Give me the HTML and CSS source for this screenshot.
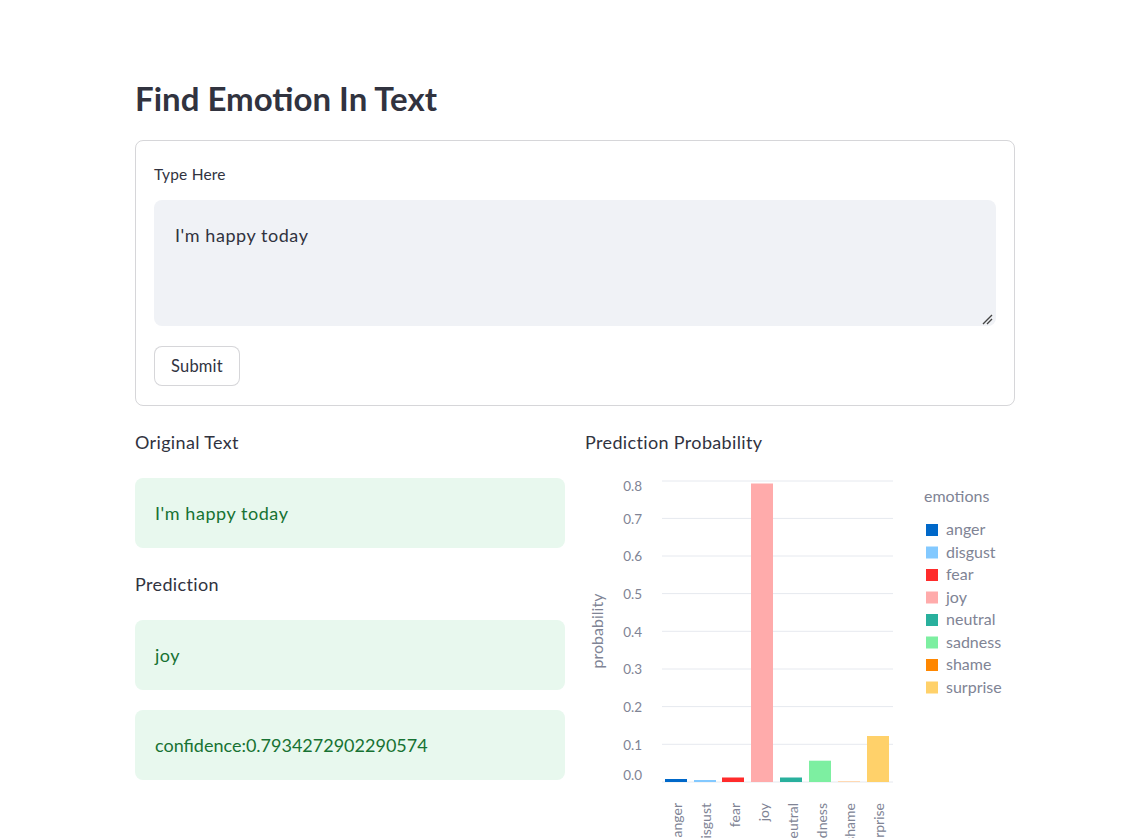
FILE: index.html
```html
<!DOCTYPE html>
<html lang="en">
<head>
<meta charset="utf-8">
<title>Find Emotion In Text</title>
<link rel="stylesheet" href="styles.css">
</head>
<body>
<main class="page">
  <h1 class="title">Find Emotion In Text</h1>

  <form class="form-card">
    <label class="field-label">Type Here</label>
    <div class="textarea">I'm happy today
      <svg class="resize" width="12" height="12" viewBox="0 0 12 12"><path d="M2 11 L11 2 M6 11 L11 6" stroke="#444" stroke-width="1.4" fill="none"/></svg>
    </div>
    <button type="button" class="submit">Submit</button>
  </form>

  <div class="cols">
    <section class="col">
      <h3 class="col-label">Original Text</h3>
      <div class="success">I'm happy today</div>
      <h3 class="col-label">Prediction</h3>
      <div class="success">joy</div>
      <div class="success num">confidence:0.7934272902290574</div>
    </section>

    <section class="col">
      <h3 class="col-label">Prediction Probability</h3>
      <svg class="chart" width="430" height="400" viewBox="0 0 430 400">
        <g class="grid">
          <line x1="77" x2="308" y1="21" y2="21"/>
          <line x1="77" x2="308" y1="58.4" y2="58.4"/>
          <line x1="77" x2="308" y1="96" y2="96"/>
          <line x1="77" x2="308" y1="133.6" y2="133.6"/>
          <line x1="77" x2="308" y1="171.3" y2="171.3"/>
          <line x1="77" x2="308" y1="209" y2="209"/>
          <line x1="77" x2="308" y1="246.6" y2="246.6"/>
          <line x1="77" x2="308" y1="284.3" y2="284.3"/>
          <line x1="77" x2="308" y1="322" y2="322"/>
        </g>
        <g class="ticks">
          <text x="57" y="26">0.8</text>
          <text x="57" y="58.5">0.7</text>
          <text x="57" y="96">0.6</text>
          <text x="57" y="134">0.5</text>
          <text x="57" y="172">0.4</text>
          <text x="57" y="209">0.3</text>
          <text x="57" y="247">0.2</text>
          <text x="57" y="285">0.1</text>
          <text x="57" y="315">0.0</text>
        </g>
        <text class="axis-title" transform="translate(11 171) rotate(-90)">probability</text>
        <g class="bars">
          <rect x="80" y="319" width="22" height="3" fill="#0068c9"/>
          <rect x="109" y="320" width="22" height="2" fill="#83c9ff"/>
          <rect x="137" y="317.5" width="22" height="4.5" fill="#ff2b2b"/>
          <rect x="166" y="23.5" width="22" height="298.5" fill="#ffabab"/>
          <rect x="195" y="317.5" width="22" height="4.5" fill="#29b09d"/>
          <rect x="224" y="300.7" width="22" height="21.3" fill="#7defa1"/>
          <rect x="253" y="321" width="22" height="1" fill="#ffd9b3"/>
          <rect x="282" y="276" width="22" height="46" fill="#ffd16a"/>
        </g>
        <g class="xticks">
          <text transform="translate(91 343) rotate(-90)">anger</text>
          <text transform="translate(120 343) rotate(-90)">disgust</text>
          <text transform="translate(149 343) rotate(-90)">fear</text>
          <text transform="translate(178 343) rotate(-90)">joy</text>
          <text transform="translate(207 343) rotate(-90)">neutral</text>
          <text transform="translate(236 343) rotate(-90)">sadness</text>
          <text transform="translate(264 343) rotate(-90)">shame</text>
          <text transform="translate(293 343) rotate(-90)">surprise</text>
        </g>
        <g class="legend">
          <text class="legend-title" x="339" y="42">emotions</text>
          <rect x="341" y="64" width="12" height="12" fill="#0068c9"/><text x="361" y="75">anger</text>
          <rect x="341" y="86.5" width="12" height="12" fill="#83c9ff"/><text x="361" y="97.5">disgust</text>
          <rect x="341" y="109" width="12" height="12" fill="#ff2b2b"/><text x="361" y="120">fear</text>
          <rect x="341" y="131.5" width="12" height="12" fill="#ffabab"/><text x="361" y="142.5">joy</text>
          <rect x="341" y="154" width="12" height="12" fill="#29b09d"/><text x="361" y="165">neutral</text>
          <rect x="341" y="176.5" width="12" height="12" fill="#7defa1"/><text x="361" y="187.5">sadness</text>
          <rect x="341" y="199" width="12" height="12" fill="#ff8700"/><text x="361" y="210">shame</text>
          <rect x="341" y="221.5" width="12" height="12" fill="#ffd16a"/><text x="361" y="232.5">surprise</text>
        </g>
      </svg>
    </section>
  </div>
</main>
</body>
</html>
```

FILE: styles.css
```css
* { box-sizing: border-box; }
html, body { margin: 0; padding: 0; background: #fff; }
body {
  font-family: Lato, "Source Sans Pro", "Noto Sans", sans-serif;
  color: #31333f;
  overflow: hidden;
  height: 838px;
}
.page {
  width: 880px;
  margin-left: 135px;
  padding-top: 78px;
}
.title {
  margin: 0 0 22px;
  font-size: 33px;
  line-height: 40px;
  font-weight: 700;
  color: #31333f;
}
.form-card {
  border: 1px solid rgba(49, 51, 63, 0.2);
  border-radius: 8px;
  padding: 23px 18px 19px;
  display: flex;
  flex-direction: column;
  align-items: flex-start;
}
.field-label {
  font-size: 15.5px;
  line-height: 20px;
  margin-bottom: 16px;
  letter-spacing: 0.2px;
}
.textarea {
  position: relative;
  width: 100%;
  height: 126px;
  background: #f0f2f6;
  border-radius: 8px;
  padding: 22px 21px;
  font-size: 18px;
  line-height: 26px;
  letter-spacing: 0.55px;
  color: #31333f;
}
.resize {
  position: absolute;
  right: 3px;
  bottom: 1px;
}
.submit {
  margin-top: 20px;
  height: 40px;
  padding: 0 16px;
  background: #fff;
  border: 1px solid rgba(49, 51, 63, 0.2);
  border-radius: 8px;
  font-family: inherit;
  font-size: 16.5px;
  letter-spacing: 0.2px;
  color: #31333f;
}
.cols {
  display: flex;
  gap: 20px;
  margin-top: 23px;
}
.col {
  width: 430px;
  display: flex;
  flex-direction: column;
}
.col-label {
  margin: 0 0 23px;
  font-size: 18px;
  font-weight: 400;
  line-height: 26px;
  letter-spacing: 0.35px;
}
.success {
  height: 70px;
  display: flex;
  align-items: center;
  padding: 0 20px;
  background: #e8f8ee;
  color: #177233;
  border-radius: 8px;
  font-size: 18px;
  letter-spacing: 0.55px;
  margin-bottom: 20px;
}
.success.num { letter-spacing: 0; }
.col .success + .col-label { margin-top: 3px; }
.chart {
  display: block;
  margin-top: -18px;
  overflow: visible;
}
.grid line { stroke: #e6e9ef; stroke-width: 1; }
.ticks text {
  font-size: 13.5px;
  fill: #808495;
  text-anchor: end;
  dominant-baseline: central;
}
.axis-title {
  font-size: 16px;
  fill: #808495;
  text-anchor: middle;
  dominant-baseline: central;
}
.xticks text {
  font-size: 14px;
  fill: #808495;
  text-anchor: end;
  dominant-baseline: central;
}
.legend text {
  font-size: 16px;
  fill: #808495;
}
```
